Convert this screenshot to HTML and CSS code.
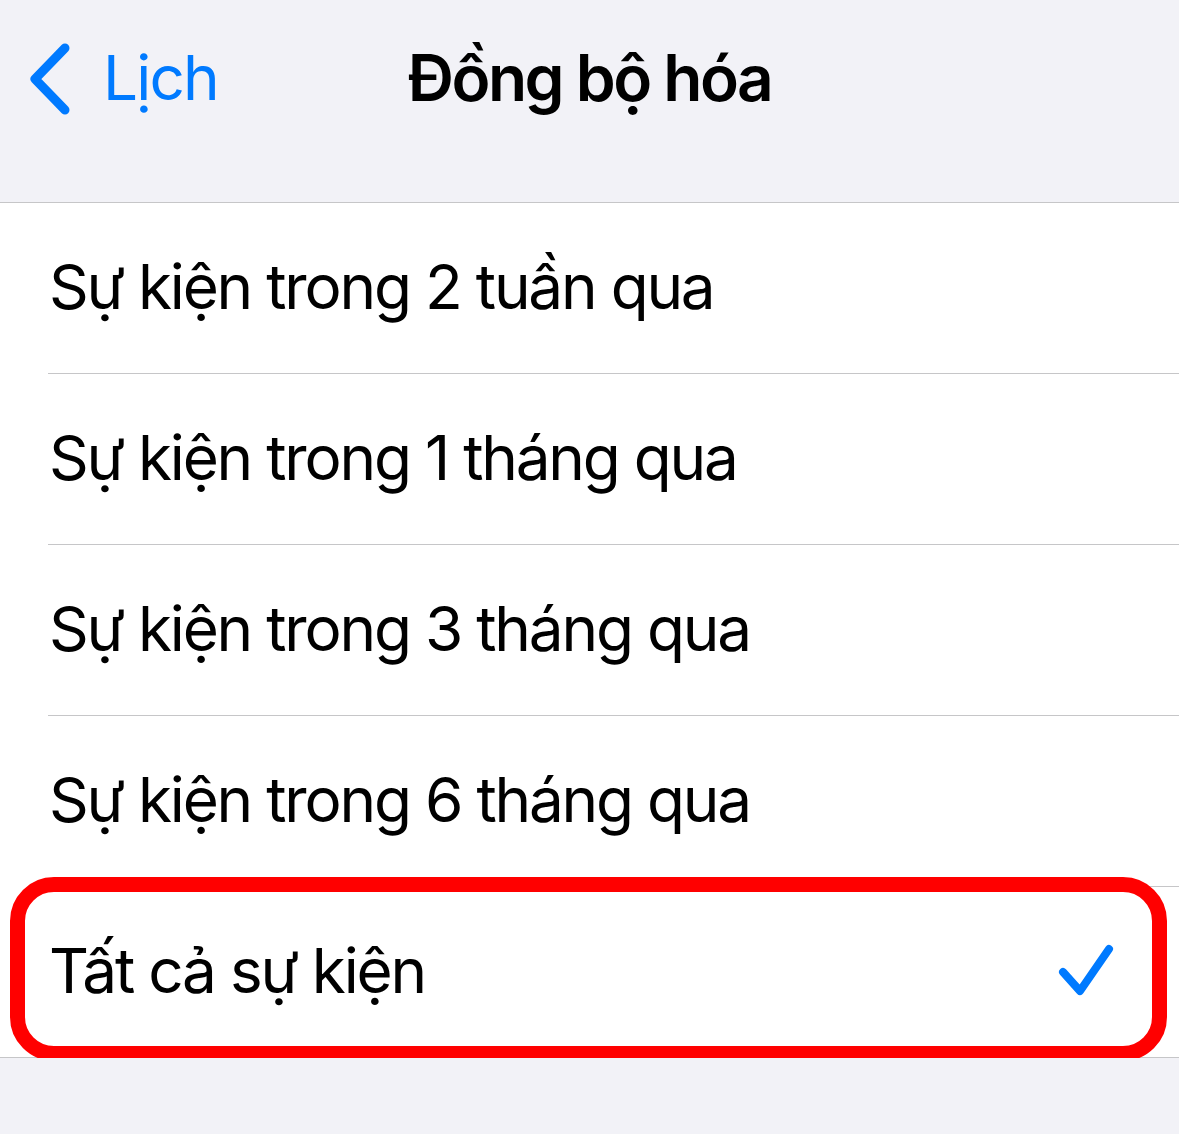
FILE: index.html
```html
<!DOCTYPE html>
<html>
<head>
	<title>Đồng bộ hóa</title>
	<meta charset="utf-8"/>
	<link rel="stylesheet" href="styles.css">
</head>
<body>

<div class="navbar">
	<a class="back" href="#">
		<svg class="chevron" width="46" height="74" viewBox="0 0 46 74">
			<path d="M38 6 L8 37 L38 68" fill="none" stroke="#007aff" stroke-width="9" stroke-linecap="round" stroke-linejoin="round"/>
		</svg>
		<span>Lịch</span>
	</a>
	<h1 class="title">Đồng bộ hóa</h1>
</div>

<ul class="list">
	<li class="row"><span class="label">Sự kiện trong 2 tuần qua</span></li>
	<li class="row"><span class="label">Sự kiện trong 1 tháng qua</span></li>
	<li class="row"><span class="label">Sự kiện trong 3 tháng qua</span></li>
	<li class="row"><span class="label">Sự kiện trong 6 tháng qua</span></li>
	<li class="row selected">
		<span class="label">Tất cả sự kiện</span>
		<svg class="check" width="60" height="60" viewBox="0 0 60 60">
			<path d="M7 28 L24 47 L53 5" fill="none" stroke="#007aff" stroke-width="8" stroke-linecap="round" stroke-linejoin="round"/>
		</svg>
		<div class="highlight"></div>
	</li>
</ul>

</body>
</html>
```

FILE: styles.css
```css
* {
	box-sizing: border-box;
}

body {
	margin: 0;
	background: #f2f2f7;
	font-family: Inter, "Noto Sans", sans-serif;
	color: #000;
}

.navbar {
	position: relative;
	height: 203px;
	border-bottom: 1px solid #c6c6c8;
	display: flex;
	align-items: flex-start;
	justify-content: center;
	padding-top: 36px;
}

.back {
	position: absolute;
	left: 27px;
	top: 42px;
	display: flex;
	align-items: center;
	gap: 30px;
	color: #007aff;
	text-decoration: none;
	font-size: 62px;
	letter-spacing: -1.8px;
}

.back span {
	margin-top: -4px;
}

.title {
	margin: 0;
	font-size: 64px;
	font-weight: 600;
	letter-spacing: -2.5px;
	line-height: 84px;
}

.list {
	list-style: none;
	margin: 0;
	padding: 0;
	background: #fff;
	border-bottom: 1px solid #c6c6c8;
}

.row {
	position: relative;
	height: 171px;
	display: flex;
	align-items: center;
	padding: 0 48px 0 49px;
	justify-content: space-between;
}

.row::after {
	content: "";
	position: absolute;
	left: 48px;
	right: 0;
	bottom: 0;
	border-bottom: 1px solid #c6c6c8;
}

.row:last-child::after {
	display: none;
}

.row:last-child {
	height: 170px;
}

.label {
	font-size: 62px;
	letter-spacing: -2.2px;
	margin-top: -4px;
}

.check {
	margin-right: 15px;
	margin-top: 4px;
}

.highlight {
	position: absolute;
	left: 10px;
	right: 12px;
	top: -10px;
	bottom: -4px;
	border: 15px solid #ff0000;
	border-radius: 44px;
	pointer-events: none;
}
```
